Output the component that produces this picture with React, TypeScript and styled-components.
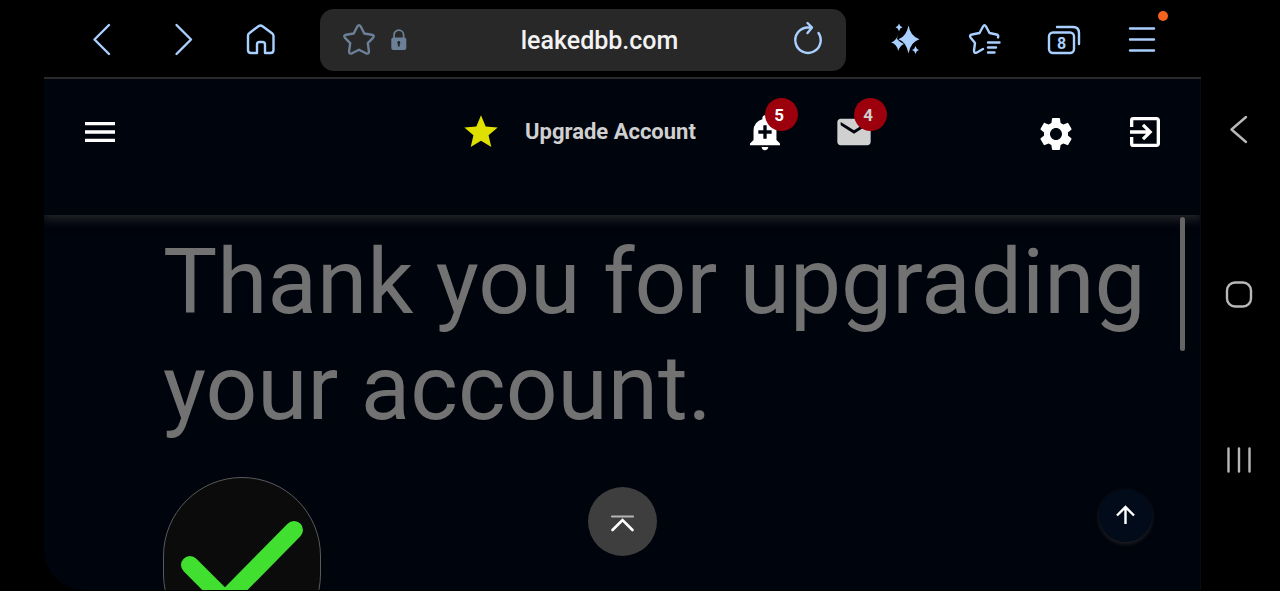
import React from "react";
import styled, { createGlobalStyle } from "styled-components";
import { MdMenu, MdStar, MdAddAlert, MdMail, MdSettings, MdExitToApp } from "react-icons/md";

const GlobalStyle = createGlobalStyle`
  * { box-sizing: border-box; }
  body { margin: 0; background: #000; font-family: Roboto, "Liberation Sans", sans-serif; }
  button { border: 0; padding: 0; background: none; color: inherit; font: inherit; cursor: pointer; }
  svg { display: block; }
`;

const Device = styled.div`
  display: flex;
  height: 100vh;
  padding-left: 44px;
  background: #000;
`;

const Browser = styled.div`
  flex: 1;
  min-width: 0;
  display: flex;
  flex-direction: column;
`;

const Toolbar = styled.nav`
  display: flex;
  align-items: center;
  height: 79px;
  flex: none;
  padding: 0 20px 0 18px;
  border-bottom: 2px solid #2a2a2a;
  color: #a9d0ff;
`;

const ToolButton = styled.button`
  position: relative;
  display: flex;
  justify-content: center;
  align-items: center;
  width: 79px;
  height: 60px;
`;

const Notice = styled.span`
  position: absolute;
  top: 2px;
  right: 13px;
  width: 10px;
  height: 10px;
  border-radius: 50%;
  background: #f4621d;
`;

const AddressBar = styled.div`
  flex: 1;
  min-width: 0;
  display: flex;
  align-items: center;
  height: 62px;
  margin: 2px 19px 0 21px;
  padding: 0 0 0 22px;
  gap: 12px;
  border-radius: 14px;
  background: #282828;
`;

const MutedButton = styled.button`
  color: #6c8097;
`;

const Address = styled.input`
  flex: 1;
  min-width: 0;
  height: 42px;
  border: 0;
  padding: 2px 0 0 20px;
  background: none;
  color: #f2f2f2;
  font: 500 25px/40px Roboto, sans-serif;
  text-align: center;
  outline: 0;
`;

const Page = styled.div`
  position: relative;
  flex: 1;
  min-height: 0;
  display: flex;
  flex-direction: column;
  margin-bottom: 1px;
  overflow: hidden;
  border-right: 1px solid #060c16;
  border-bottom-left-radius: 40px;
  background: #00040c;
`;

const SiteHeader = styled.header`
  position: relative;
  display: flex;
  flex: none;
  align-items: center;
  height: 136px;
  padding: 0 35px 30px 36px;
  background: #00040c;
  box-shadow: 0 2px 10px 2px #25272a;
  color: #fff;
`;

const Spacer = styled.div<{ $grow: number }>`
  flex: ${(p) => p.$grow} 0 0;
`;

const IconButton = styled.button<{ $color?: string }>`
  position: relative;
  width: 40px;
  height: 40px;
  color: ${(p) => p.$color ?? "#fff"};
`;

const SettingsButton = styled(IconButton)`
  height: 44px;
  padding-top: 4px;
`;

const Upgrade = styled.a`
  display: flex;
  align-items: center;
  gap: 24px;
  color: #d0d0d0;
  font-size: 22px;
  line-height: 40px;
  font-weight: 700;
  text-decoration: none;
  svg { color: #dfe000; }
`;

const Group = styled.div<{ $gap: number }>`
  display: flex;
  align-items: center;
  gap: ${(p) => p.$gap}px;
`;

const Badge = styled.span<{ $color?: string }>`
  position: absolute;
  top: -14px;
  left: 20px;
  width: 33px;
  height: 33px;
  padding-right: 4px;
  border-radius: 50%;
  background: #9b000c;
  color: ${(p) => p.$color ?? "#fff"};
  font-size: 17px;
  line-height: 34px;
  font-weight: 700;
  text-align: center;
`;

const Content = styled.main`
  flex: 1;
  min-height: 0;
  overflow: hidden;
  padding: 14px 40px 0 119px;
`;

const Title = styled.h1`
  margin: 0 0 36px;
  color: #727272;
  font-size: 91px;
  line-height: 106px;
  font-weight: 400;
`;

const Seal = styled.div`
  width: 158px;
  height: 176px;
  border: 1px solid #5a5a5a;
  border-radius: 79px;
  overflow: hidden;
  background: #0b0b0b;
`;

const ScrollThumb = styled.div`
  position: absolute;
  top: 138px;
  right: 15px;
  width: 5px;
  height: 134px;
  border-radius: 3px;
  background: #656565;
`;

const JumpTop = styled.button`
  position: absolute;
  left: 50%;
  bottom: 34px;
  width: 69px;
  height: 69px;
  margin-left: -34px;
  border-radius: 50%;
  background: #3e3e3e;
`;

const BackToTop = styled.button`
  position: absolute;
  right: 48px;
  bottom: 48px;
  width: 53px;
  height: 53px;
  border-radius: 50%;
  background: #010b19;
  box-shadow: 0 2px 4px #202226;
`;

const SystemNav = styled.nav`
  display: flex;
  flex-direction: column;
  align-items: center;
  justify-content: space-between;
  width: 79px;
  padding: 109px 0 111px;
  color: #b8b8b8;
`;

const SystemButton = styled.button`
  width: 40px;
  height: 40px;
  margin-right: 3px;
`;

type LineProps = { size: number; width?: number; children: React.ReactNode };
const Line = ({ size, width = 2.4, children }: LineProps) => (
  <svg width={size} height={size} viewBox={`0 0 ${size} ${size}`} fill="none" stroke="currentColor"
    strokeWidth={width} strokeLinecap="round" strokeLinejoin="round" aria-hidden="true">
    {children}
  </svg>
);

export default function App() {
  return (
    <>
      <GlobalStyle />
      <Device>
        <Browser>
          <Toolbar aria-label="Browser">
            <ToolButton aria-label="Back">
              <Line size={40}><path d="M27 6 12.500 20.500 27 35" /></Line>
            </ToolButton>
            <ToolButton aria-label="Forward">
              <Line size={40}><path d="M15.500 6 30 20.500 15.500 35" /></Line>
            </ToolButton>
            <ToolButton aria-label="Home">
              <Line size={40}><path d="M8 16.500Q8 15 9.500 14L18.500 7.200Q20.500 5.800 22.500 7.200L32 14.200Q33.500 15.300 33.500 17V31Q33.500 34 30.500 34H25V25.500Q25 23 22.500 23H19.500Q17 23 17 25.500V34H11Q8 34 8 31Z" /></Line>
            </ToolButton>
            <AddressBar>
              <MutedButton aria-label="Bookmark">
                <Line size={34}><path d="M15.300 3.500Q17 .8 18.700 3.500L22.300 10.500 29.800 11.700Q33 12.300 31 14.800L25.800 20.200 26.900 28.200Q27 31.500 24 30.300L17 26.800 10 30.300Q7 31.500 7.100 28.200L8.200 20.200 3 14.800Q1 12.300 4.200 11.700L11.700 10.500Z" /></Line>
              </MutedButton>
              <MutedButton aria-label="Site security">
                <svg width="24" height="24" viewBox="0 0 24 24" aria-hidden="true">
                  <path d="M6 11V7a4.800 4.800 0 0 1 9.600 0v4" fill="none" stroke="currentColor" strokeWidth="1.700" />
                  <rect x="3.300" y="9.500" width="15" height="12.500" rx="2" fill="currentColor" />
                  <path d="M10.800 13a1.700 1.700 0 0 1 .9 3v2.500h-1.800V16a1.700 1.700 0 0 1 .9-3z" fill="#202428" />
                </svg>
              </MutedButton>
              <Address aria-label="Address" defaultValue="leakedbb.com" />
              <ToolButton aria-label="Reload">
                <Line size={40}><path d="M31.500 13A12.700 12.700 0 1 1 20 7.500H24.500M20.500 3 25 7.500 20.500 13" /></Line>
              </ToolButton>
            </AddressBar>
            <ToolButton aria-label="Assistant">
              <svg width="40" height="40" viewBox="0 0 40 40" fill="currentColor" aria-hidden="true">
                <path d="M23.500 6.500Q25.500 17.500 34.500 20.200 25.500 23 23.500 34.500 21.500 23 13.500 20.200 21.500 17.500 23.500 6.500Z" />
                <path d="M13 15Q12 21.500 6 23.500 12 25 13.200 32 15 26.500 19 25 14 22.500 12 20Z" />
                <path d="M14 4.500Q14.800 7.700 17.500 8.300 14.800 9 14 12.200 13.200 9 10.500 8.300 13.200 7.700 14 4.500ZM30.500 27Q31.300 30.300 34 31 31.300 31.700 30.500 35 29.700 31.700 27 31 29.700 30.300 30.500 27Z" />
              </svg>
            </ToolButton>
            <ToolButton aria-label="Bookmarks">
              <Line size={40}><path d="M19 30 12.500 33.700Q10 34.500 10 31.500L11 24 6.500 18.500Q5 16 8 15.500L15.500 14 19 7.500Q20.500 5 22 7.500L25.500 14 32.500 15.500Q35 16 34 18.500M24 23.500H35.500M24 28.500H32M24 33.500H30.500" /></Line>
            </ToolButton>
            <ToolButton aria-label="Tabs, 8 open">
              <svg width="40" height="40" viewBox="0 0 40 40" fill="none" stroke="currentColor" strokeWidth="2.400" strokeLinecap="round" aria-hidden="true">
                <rect x="6" y="13.500" width="25" height="20.500" rx="4" />
                <path d="M14 8H30Q36 8 36 14V25" />
                <text x="18.500" y="30" textAnchor="middle" fill="currentColor" stroke="none" fontSize="16" fontWeight="700">8</text>
              </svg>
            </ToolButton>
            <ToolButton aria-label="Menu">
              <Line size={40}><path d="M8 9.500H32M8 20.500H32M8 31.500H32" /></Line>
              <Notice />
            </ToolButton>
          </Toolbar>

          <Page>
            <SiteHeader>
              <IconButton aria-label="Site menu"><MdMenu size={40} /></IconButton>
              <Spacer $grow={21} />
              <Upgrade href="#upgrade"><MdStar size={40} />Upgrade Account</Upgrade>
              <Spacer $grow={3} />
              <Group $gap={49}>
                <IconButton aria-label="Alerts"><MdAddAlert size={40} /><Badge>5</Badge></IconButton>
                <IconButton aria-label="Messages" $color="#d0d0d0"><MdMail size={40} /><Badge $color="#d0d0d0">4</Badge></IconButton>
              </Group>
              <Spacer $grow={10} />
              <Group $gap={49}>
                <SettingsButton aria-label="Settings"><MdSettings size={40} /></SettingsButton>
                <IconButton aria-label="Log out"><MdExitToApp size={40} /></IconButton>
              </Group>
            </SiteHeader>
            <Content>
              <Title>Thank you for upgrading your account.</Title>
              <Seal>
                <svg width="156" height="174" viewBox="0 0 156 174" fill="none" stroke="#40df30" strokeWidth="18" strokeLinecap="round" aria-hidden="true">
                  <path d="M26 87 61 122 130 52" />
                </svg>
              </Seal>
            </Content>
            <ScrollThumb />
            <JumpTop aria-label="Jump to top">
              <svg width="69" height="69" viewBox="0 0 69 69" fill="none" strokeLinecap="round" aria-hidden="true">
                <path d="M24 29.500H45" stroke="#b5b5b5" strokeWidth="2.200" />
                <path d="M24.500 43 34.500 33 44.500 43" stroke="#fff" strokeWidth="2.600" />
              </svg>
            </JumpTop>
            <BackToTop aria-label="Back to top">
              <svg width="53" height="53" viewBox="0 0 53 53" fill="none" stroke="#fff" strokeWidth="2.400" aria-hidden="true">
                <path d="M26.500 35V18M18 26.500 26.500 18 35 26.500" />
              </svg>
            </BackToTop>
          </Page>
        </Browser>
        <SystemNav aria-label="System">
          <SystemButton aria-label="System back"><Line size={40}><path d="M27 8 12.500 20.500 27 33" /></Line></SystemButton>
          <SystemButton aria-label="System home"><Line size={40}><rect x="8" y="7.500" width="24" height="24" rx="8" /></Line></SystemButton>
          <SystemButton aria-label="Recent apps"><Line size={40}><path d="M9.500 8.500V31.500M20 8.500V31.500M30.500 8.500V31.500" /></Line></SystemButton>
        </SystemNav>
      </Device>
    </>
  );
}
